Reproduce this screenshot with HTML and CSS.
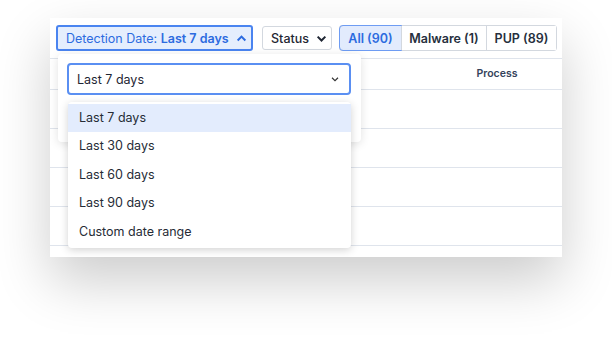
FILE: index.html
```html
<!DOCTYPE html>
<html lang="en">
<head>
    <meta charset="UTF-8">
    <meta name="viewport" content="width=device-width, initial-scale=1.0">
    <title>Detections</title>
    <link rel="stylesheet" href="styles.css">
</head>
<body>
    <div class="card">
        <div class="toolbar">
            <div class="date-filter">
                <button class="filter-btn active">
                    Detection Date:&nbsp;<b>Last 7 days</b>
                    <svg width="11" height="11" viewBox="0 0 10 10"><path d="M1.5 6.8 L5 3.3 L8.5 6.8" fill="none" stroke="currentColor" stroke-width="1.8"/></svg>
                </button>
                <div class="popover">
                    <div class="select">
                        <span>Last 7 days</span>
                        <svg width="10" height="10" viewBox="0 0 10 10"><path d="M2 3.8 L5 6.6 L8 3.8" fill="none" stroke="#333" stroke-width="1.2"/></svg>
                        <ul class="options">
                            <li class="selected">Last 7 days</li>
                            <li>Last 30 days</li>
                            <li>Last 60 days</li>
                            <li>Last 90 days</li>
                            <li>Custom date range</li>
                        </ul>
                    </div>
                </div>
            </div>
            <button class="filter-btn status">
                Status
                <svg width="11" height="11" viewBox="0 0 10 10"><path d="M1.5 3.3 L5 6.8 L8.5 3.3" fill="none" stroke="currentColor" stroke-width="1.8"/></svg>
            </button>
            <div class="segments">
                <button class="seg on">All (90)</button>
                <button class="seg malware">Malware (1)</button>
                <button class="seg pup">PUP (89)</button>
            </div>
        </div>

        <div class="table">
            <div class="thead">
                <div class="th process">Process</div>
            </div>
            <div class="tr"></div>
            <div class="tr"></div>
            <div class="tr"></div>
            <div class="tr"></div>
        </div>
    </div>
</body>
</html>
```

FILE: styles.css
```css
html {
    background-color: white;
}
body {
    margin: 0;
    padding: 18px 50px 80px;
    font-family: Inter, "Noto Sans", sans-serif;
    color: #1f2633;
}
.card {
    background-color: white;
    height: 239px;
    box-shadow: 0 24px 52px rgba(0,0,0,0.2);
}
.toolbar {
    display: flex;
    align-items: center;
    padding: 7px 6px 0;
    height: 26px;
}
.date-filter {
    position: relative;
}
button {
    font-family: inherit;
    cursor: pointer;
    white-space: nowrap;
    box-sizing: border-box;
}
svg {
    flex-shrink: 0;
}
.filter-btn {
    display: flex;
    align-items: center;
    gap: 5px;
    height: 24px;
    padding: 0 8px;
    background-color: white;
    border: 1px solid #d3d8df;
    border-radius: 3px;
    font-size: 12.5px;
    color: #1f2633;
}
.filter-btn.active {
    gap: 0;
    width: 197px;
    height: 26px;
    padding: 0 8px;
    border: 2px solid #4a84f0;
    background-color: #e5eefd;
    color: #2c6be0;
}
.filter-btn.active b {
    font-weight: 600;
}
.filter-btn.active svg {
    margin-left: 7px;
}
.status {
    margin-left: 9px;
    width: 70px;
    font-weight: 500;
}
.status svg {
    margin-left: 2px;
}
.segments {
    display: flex;
    margin-left: 7px;
    border: 1px solid #d3d8df;
    border-radius: 3px;
    height: 24px;
}
.seg {
    border: none;
    border-left: 1px solid #d3d8df;
    background-color: white;
    font-size: 12.5px;
    font-weight: 600;
    color: #262f3d;
    padding: 0;
    text-align: center;
}
.seg:first-child {
    border-left: none;
}
.seg.on {
    background-color: #e2ebfd;
    color: #2c6be0;
    outline: 1px solid #6e9cf3;
    border-radius: 3px 0 0 3px;
    width: 61px;
}
.seg.malware {
    width: 85px;
}
.seg.pup {
    width: 70px;
}
.table {
    margin-top: 7px;
}
.thead {
    display: flex;
    justify-content: flex-end;
    height: 30px;
    border-top: 1px solid #dfe4ec;
    border-bottom: 1px solid #dfe4ec;
}
.th {
    font-size: 10.5px;
    font-weight: 600;
    color: #34425a;
    line-height: 30px;
}
.process {
    width: 118px;
    text-align: center;
    margin-right: 6px;
}
.tr {
    height: 38px;
    border-bottom: 1px solid #dfe4ec;
}
.popover {
    position: absolute;
    top: 29px;
    left: 2px;
    width: 303px;
    height: 88px;
    background-color: white;
    border-radius: 4px;
    box-shadow: 0 2px 10px rgba(0,0,0,0.12);
}
.select {
    position: relative;
    display: flex;
    align-items: center;
    justify-content: space-between;
    margin: 9px 10px 0 9px;
    height: 28px;
    padding: 0 9px 0 8px;
    border: 2px solid #5a8ff2;
    border-radius: 4px;
    font-size: 12.5px;
}
.options {
    position: absolute;
    top: 37px;
    left: -1px;
    right: -2px;
    margin: 0;
    padding: 2px 0;
    list-style: none;
    background-color: white;
    border-radius: 4px;
    box-shadow: 0 2px 8px rgba(0,0,0,0.18);
}
.options li {
    height: 28.4px;
    line-height: 28px;
    padding-left: 11px;
    font-size: 12.5px;
    color: #262c36;
}
.options li.selected {
    background-color: #e3ecfd;
}
```
